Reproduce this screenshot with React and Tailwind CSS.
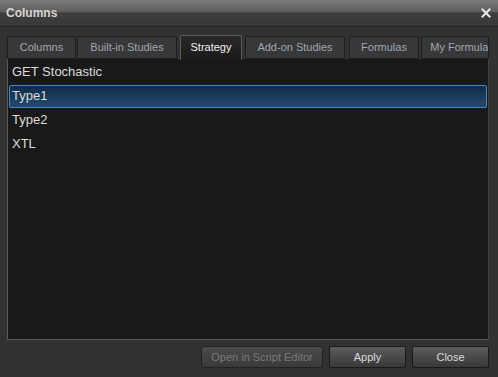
export default function App() {
  const font = { fontFamily: '"Liberation Sans", Arial, sans-serif' };
  const tabs = [
    { label: "Columns", w: "w-[69px]", ml: "ml-0" },
    { label: "Built-in Studies", w: "w-[100px]", ml: "ml-[1px]" },
    { label: "Strategy", w: "w-[62px]", ml: "ml-[3px]", active: true },
    { label: "Add-on Studies", w: "w-[100px]", ml: "ml-[3px]" },
    { label: "Formulas", w: "w-[70px]", ml: "ml-[4px]" },
  ];
  const items = ["GET Stochastic", "Type1", "Type2", "XTL"];
  return (
    <div className="w-[498px] h-[377px] bg-[#323232] flex flex-col overflow-hidden" style={font}>
      <div className="h-[27px] shrink-0 flex items-center justify-between pl-[6px] pr-[6px] border-b border-[#262626] bg-[linear-gradient(to_bottom,#7c7c7c_0%,#5e5e5e_45%,#3e3e3e_50%,#383838_100%)]">
        <span className="text-[12px] font-bold text-[#d6d6d6] leading-none">Columns</span>
        <svg width="10" height="10" viewBox="0 0 10 10" className="mr-[1px]">
          <path d="M1.5 1.5 L8.5 8.5 M8.5 1.5 L1.5 8.5" stroke="#e8e8e8" strokeWidth="2" strokeLinecap="square" />
        </svg>
      </div>
      <div className="flex flex-col pl-[7px] pr-[9px] pt-[8px]">
        <div className="flex items-end h-[25px] overflow-hidden relative z-10">
          {tabs.map((t) =>
            t.active ? (
              <div
                key={t.label}
                className={`${t.w} ${t.ml} shrink-0 h-[25px] border border-b-0 border-[#5a5a5a] rounded-t-[2px] bg-[linear-gradient(to_bottom,#2a2a2a,#1a1a1a)] flex items-center justify-center text-[11px] text-[#f2f2f2] pb-[1px]`}
              >
                {t.label}
              </div>
            ) : (
              <div
                key={t.label}
                className={`${t.w} ${t.ml} shrink-0 h-[23px] mb-[1px] border border-[#1e1e1e] rounded-t-[2px] bg-[#383838] flex items-center justify-center text-[11px] text-[#9ea7b1] whitespace-nowrap overflow-hidden`}
              >
                {t.label}
              </div>
            )
          )}
          <div className="w-[68px] ml-[2px] shrink-0 h-[23px] mb-[1px] overflow-hidden border-r border-[#1e1e1e]">
            <div className="w-[82px] h-[23px] border border-[#1e1e1e] rounded-t-[2px] bg-[#383838] flex items-center justify-center text-[11px] text-[#9ea7b1] whitespace-nowrap">
              My Formulas
            </div>
          </div>
        </div>
        <div className="h-[281px] -mt-[1px] bg-[#191919] border-l border-b border-r border-l-[#5a5a5a] border-b-[#5a5a5a] border-r-[#444] flex flex-col pt-[1px] pl-[1px] pr-[1px]">
          {items.map((it) =>
            it === "Type1" ? (
              <div
                key={it}
                className="h-[23px] my-[0.5px] border border-[#3f8ccc] rounded-[2px] bg-[linear-gradient(to_bottom,#0e2c49,#244a6b)] flex items-center pl-[2px] text-[13px] text-[#dcdcdc]"
              >
                {it}
              </div>
            ) : (
              <div key={it} className="h-[24px] flex items-center pl-[3px] text-[13px] text-[#dcdcdc]">
                {it}
              </div>
            )
          )}
        </div>
        <div className="flex justify-end gap-[6px] mt-[6px] pr-0">
          <button className="w-[122px] h-[22px] border border-[#222] rounded-[2px] bg-[linear-gradient(to_bottom,#4a4a4a,#3a3a3a)] text-[11px] text-[#7a7a7a]">
            Open in Script Editor
          </button>
          <button className="w-[77px] h-[22px] border border-[#1a1a1a] rounded-[2px] bg-[linear-gradient(to_bottom,#5c5c5c,#383838)] text-[11px] text-[#dadada]">
            Apply
          </button>
          <button className="w-[77px] h-[22px] border border-[#1a1a1a] rounded-[2px] bg-[linear-gradient(to_bottom,#5c5c5c,#383838)] text-[11px] text-[#dadada]">
            Close
          </button>
        </div>
      </div>
    </div>
  );
}
